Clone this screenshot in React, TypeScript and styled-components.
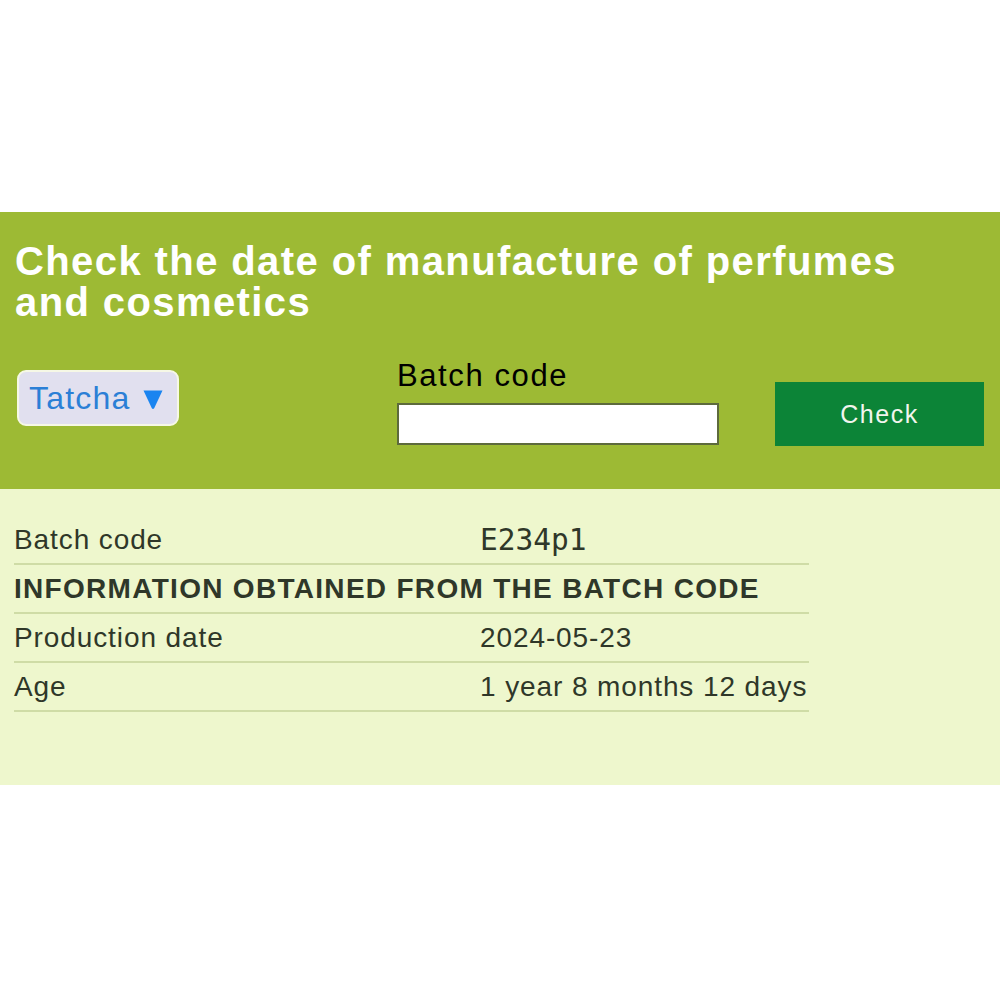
import React from 'react';
import styled, { createGlobalStyle } from 'styled-components';

const GlobalStyle = createGlobalStyle`
    html, body {
        margin: 0;
        padding: 0;
        background: #ffffff;
        font-family: 'Liberation Sans', Arial, sans-serif;
    }
`;

const Page = styled.div`
    width: 1000px;
    padding-top: 212px;
`;

const Header = styled.div`
    background: #9dba34;
    height: 277px;
    box-sizing: border-box;
    padding: 29px 15px 0 15px;
`;

const Title = styled.h1`
    margin: 0;
    width: 920px;
    color: #ffffff;
    font-size: 40px;
    line-height: 41px;
    letter-spacing: 1.4px;
    font-weight: bold;
`;

const FormRow = styled.div`
    display: flex;
    align-items: flex-start;
    margin-top: 22px;
`;

const Select = styled.div`
    margin-top: 25px;
    margin-left: 2px;
    width: 162px;
    height: 56px;
    box-sizing: border-box;
    display: flex;
    align-items: center;
    padding-left: 10px;
    background: #e1e0ef;
    border: 2px solid #f6f8e6;
    border-radius: 9px;
    color: #2b7fd6;
    font-size: 32px;
    letter-spacing: 1.2px;

    & svg {
        margin-left: 12px;
        margin-top: 2px;
    }
`;

const Field = styled.div`
    display: flex;
    flex-direction: column;
    margin-left: 218px;
`;

const Label = styled.label`
    color: #000000;
    font-size: 31px;
    line-height: 34px;
    letter-spacing: 1.6px;
    margin-top: 14px;
`;

const Input = styled.input`
    margin-top: 10px;
    width: 322px;
    height: 42px;
    box-sizing: border-box;
    border: 2px solid #5d6a3c;
    background: #ffffff;
    outline: none;
`;

const Button = styled.button`
    margin-top: 37px;
    margin-left: 56px;
    width: 209px;
    height: 64px;
    border: none;
    background: #0c8437;
    color: #f2f5ee;
    font-family: 'Liberation Sans', Arial, sans-serif;
    font-size: 25px;
    letter-spacing: 1.5px;
`;

const Results = styled.div`
    background: #eef7cd;
    height: 296px;
    box-sizing: border-box;
    padding: 27px 0 0 14px;
`;

const Table = styled.div`
    width: 795px;
    color: #2f3729;
`;

const Row = styled.div`
    display: flex;
    height: 49px;
    box-sizing: border-box;
    align-items: center;
    border-bottom: 2px solid #cfdca6;
    font-size: 28px;
    letter-spacing: 0.9px;
    white-space: nowrap;
`;

const Name = styled.div`
    width: 466px;
`;

const Value = styled.div<{ $mono?: boolean }>`
    font-family: ${(p) =>
        p.$mono ? "'DejaVu Sans Mono', monospace" : "'Liberation Sans', Arial, sans-serif"};
    font-size: ${(p) => (p.$mono ? '29.5px' : '28px')};
    letter-spacing: ${(p) => (p.$mono ? '0' : '0.9px')};
`;

const Heading = styled.div`
    font-weight: bold;
    letter-spacing: 1.3px;
`;

const rows = [
    { name: 'Production date', value: '2024-05-23' },
    { name: 'Age', value: '1 year 8 months 12 days' },
];

const App = () => (
    <Page>
        <GlobalStyle />
        <Header>
            <Title>
                Check the date of manufacture of perfumes and cosmetics
            </Title>
            <FormRow>
                <Select>
                    Tatcha
                    <svg width="22" height="21" viewBox="0 0 22 21">
                        <path d="M1.5 1.5 L20.5 1.5 L12.3 19 Q11 21 9.7 19 Z" fill="#1a84f0" />
                    </svg>
                </Select>
                <Field>
                    <Label>Batch code</Label>
                    <Input type="text" />
                </Field>
                <Button>Check</Button>
            </FormRow>
        </Header>
        <Results>
            <Table>
                <Row>
                    <Name>Batch code</Name>
                    <Value $mono>E234p1</Value>
                </Row>
                <Row>
                    <Heading>INFORMATION OBTAINED FROM THE BATCH CODE</Heading>
                </Row>
                {rows.map((r) => (
                    <Row key={r.name}>
                        <Name>{r.name}</Name>
                        <Value>{r.value}</Value>
                    </Row>
                ))}
            </Table>
        </Results>
    </Page>
);

export default App;
